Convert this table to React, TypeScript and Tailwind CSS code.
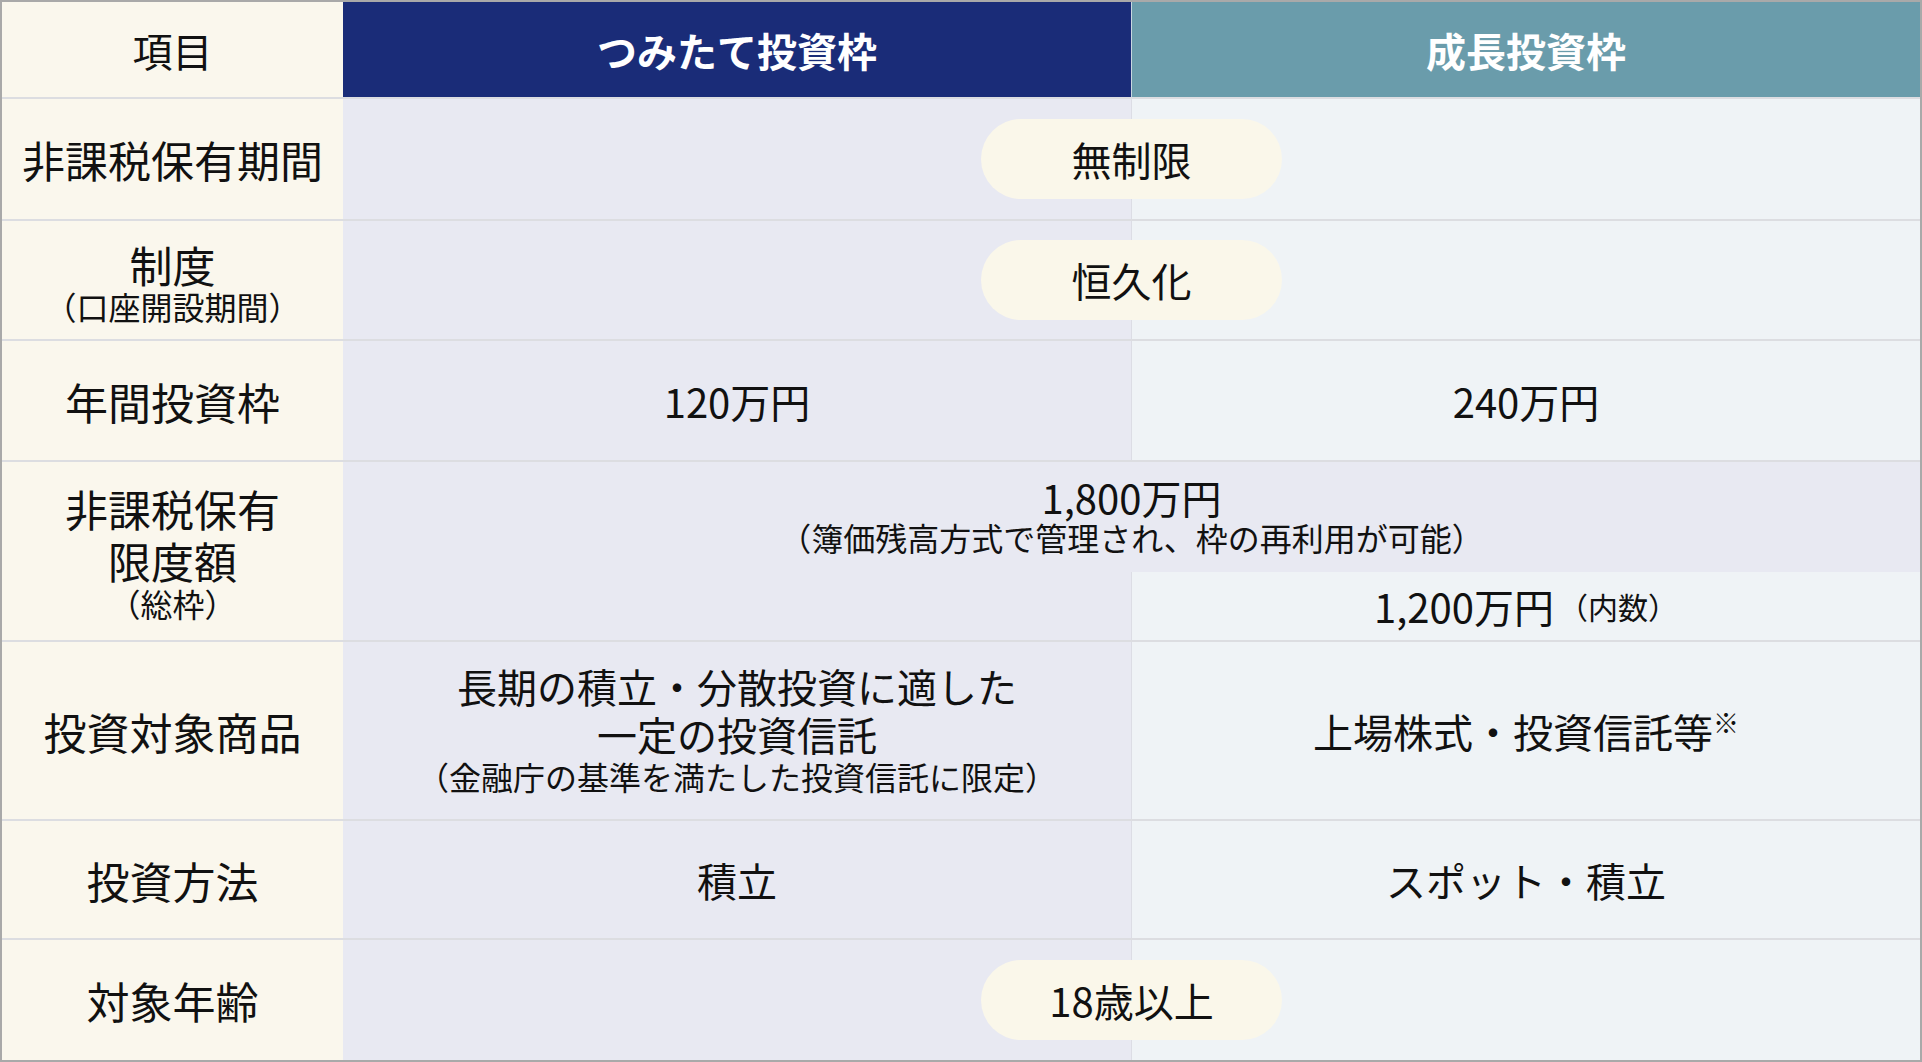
import React from "react";

const SEP = "border-b-2 border-[#dcdde1]";

function Label({ children }: { children: React.ReactNode }) {
  return (
    <div className="col-start-1 row-start-1 bg-[#faf7ed] flex flex-col items-center justify-center text-center text-[43px] leading-[52px]">
      {children}
    </div>
  );
}

function Pill({ children }: { children: React.ReactNode }) {
  return (
    <div className="w-[301px] h-[80px] rounded-full bg-[#faf7ea] flex items-center justify-center text-[40px] leading-none">
      {children}
    </div>
  );
}

function MergedRow({ h, label, children, last }: { h: string; label: React.ReactNode; children: React.ReactNode; last?: boolean }) {
  return (
    <div className={`grid grid-cols-[341px_788px_789px] grid-rows-1 ${h} ${last ? "" : SEP}`}>
      <Label>{label}</Label>
      <div className="col-start-2 row-start-1 bg-[#e8e9f2]" />
      <div className="col-start-3 row-start-1 bg-[#eff3f6] border-l border-[#dcdde5]" />
      <div className="col-start-2 col-span-2 row-start-1 flex items-center justify-center">{children}</div>
    </div>
  );
}

function SplitRow({ h, label, left, right, last }: { h: string; label: React.ReactNode; left: React.ReactNode; right: React.ReactNode; last?: boolean }) {
  return (
    <div className={`grid grid-cols-[341px_788px_789px] grid-rows-1 ${h} ${last ? "" : SEP}`}>
      <Label>{label}</Label>
      <div className="col-start-2 row-start-1 bg-[#e8e9f2] flex flex-col items-center justify-center text-center">{left}</div>
      <div className="col-start-3 row-start-1 bg-[#eff3f6] border-l border-[#dcdde5] flex flex-col items-center justify-center text-center">{right}</div>
    </div>
  );
}

export default function App() {
  return (
    <div className="w-[1922px] h-[1062px] bg-white text-[#111] font-['Noto_Sans_CJK_JP','Noto_Sans',sans-serif]">
      <div className="border-2 border-[#a9a9a9] flex flex-col">
        {/* header */}
        <div className={`grid grid-cols-[341px_788px_789px] h-[97px] ${SEP}`}>
          <div className="bg-[#faf7ed] flex items-center justify-center text-[40px]">項目</div>
          <div className="bg-[#1a2c78] flex items-center justify-center text-[40px] font-bold text-white">つみたて投資枠</div>
          <div className="bg-[#6a9cab] border-l border-[#c9d6e0] flex items-center justify-center text-[40px] font-bold text-white">成長投資枠</div>
        </div>

        <MergedRow h="h-[122px]" label={<div>非課税保有期間</div>}>
          <Pill>無制限</Pill>
        </MergedRow>

        <MergedRow
          h="h-[120px]"
          label={
            <>
              <div>制度</div>
              <div className="text-[32px] leading-[32px]">（口座開設期間）</div>
            </>
          }
        >
          <Pill>恒久化</Pill>
        </MergedRow>

        <SplitRow
          h="h-[121px]"
          label={<div>年間投資枠</div>}
          left={<div className="text-[40px]">120万円</div>}
          right={<div className="text-[40px]">240万円</div>}
        />

        {/* 非課税保有限度額 */}
        <div className={`grid grid-cols-[341px_1577px] grid-rows-1 h-[180px] ${SEP}`}>
          <Label>
            <div>非課税保有</div>
            <div>限度額</div>
            <div className="text-[32px] leading-[34px]">（総枠）</div>
          </Label>
          <div className="col-start-2 row-start-1 flex flex-col">
            <div className="h-[110px] bg-[#e8e9f2] flex flex-col items-center justify-center text-center pb-[6px]">
              <div className="text-[40px] leading-[46px]">1,800万円</div>
              <div className="text-[32px] leading-[34px]">（簿価残高方式で管理され、枠の再利用が可能）</div>
            </div>
            <div className="flex-1 grid grid-cols-[788px_789px]">
              <div className="bg-[#e8e9f2]" />
              <div className="bg-[#eff3f6] border-l border-[#dcdde5] flex items-center justify-center">
                <span className="text-[40px] leading-none">1,200万円</span>
                <span className="text-[30px] leading-none ml-[4px]">（内数）</span>
              </div>
            </div>
          </div>
        </div>

        <SplitRow
          h="h-[179px]"
          label={<div>投資対象商品</div>}
          left={
            <div className="pb-[6px] flex flex-col items-center">
              <div className="text-[40px] leading-[48px]">長期の積立・分散投資に適した</div>
              <div className="text-[40px] leading-[48px]">一定の投資信託</div>
              <div className="text-[32px] leading-[36px]">（金融庁の基準を満たした投資信託に限定）</div>
            </div>
          }
          right={
            <div className="text-[40px] leading-[48px]">
              上場株式・投資信託等
              <span className="inline-block text-[26px] leading-none align-top relative top-[2px]">※</span>
            </div>
          }
        />

        <SplitRow
          h="h-[119px]"
          label={<div>投資方法</div>}
          left={<div className="text-[40px]">積立</div>}
          right={<div className="text-[40px]">スポット・積立</div>}
        />

        <MergedRow h="h-[120px]" label={<div>対象年齢</div>} last>
          <Pill>18歳以上</Pill>
        </MergedRow>
      </div>
    </div>
  );
}
